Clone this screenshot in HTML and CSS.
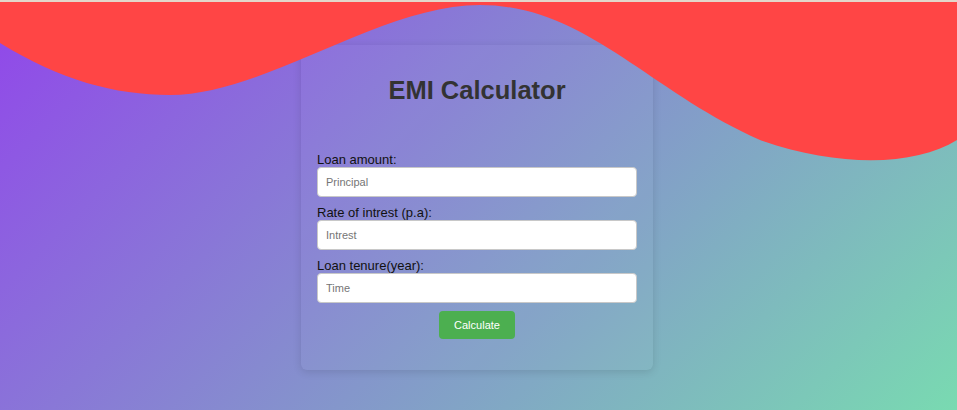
FILE: index.html
```html
<!DOCTYPE html>
<html lang="en">
<head>
<meta charset="utf-8">
<title>EMI Calculator</title>
<link rel="stylesheet" href="styles.css">
</head>
<body>
<div class="strip"></div>
<main class="page">
  <svg class="wave" viewBox="0 0 957 160" preserveAspectRatio="none" aria-hidden="true">
    <path d="M0,41 C60,78 115,93 170,93 C265,93 380,3 480,3 C585,3 650,90 760,138 C840,166 915,164 957,138 L957,0 L0,0 Z" fill="#ff4545"/>
  </svg>
  <section class="card">
    <h1 class="title">EMI Calculator</h1>
    <form class="form">
      <label class="label" for="principal">Loan amount:</label>
      <input class="field" id="principal" type="text" placeholder="Principal">
      <label class="label" for="interest">Rate of intrest (p.a):</label>
      <input class="field" id="interest" type="text" placeholder="Intrest">
      <label class="label" for="time">Loan tenure(year):</label>
      <input class="field" id="time" type="text" placeholder="Time">
      <div class="actions">
        <button class="btn" type="button">Calculate</button>
      </div>
    </form>
  </section>
</main>
</body>
</html>
```

FILE: styles.css
```css
* { box-sizing: border-box; }
html, body { margin: 0; padding: 0; }
body {
  width: 957px;
  height: 410px;
  overflow: hidden;
  font-family: "Liberation Sans", Arial, sans-serif;
}
.strip {
  height: 2px;
  background: #e3d6ca;
}
.page {
  position: relative;
  height: 408px;
  padding-right: 3px;
  background: linear-gradient(135deg, #9146ea, #79dab1);
  display: flex;
  justify-content: center;
  align-items: flex-start;
}
.wave {
  position: absolute;
  top: 0;
  left: 0;
  width: 957px;
  height: 160px;
  z-index: 2;
}
.card {
  margin-top: 43px;
  width: 352px;
  padding: 30px 16px 31px;
  background: rgba(255, 255, 255, 0.03);
  border-radius: 6px;
  box-shadow: 0 2px 8px rgba(0, 0, 0, 0.12);
}
.title {
  margin: 0 0 47px;
  font-size: 25.5px;
  line-height: 30px;
  font-weight: bold;
  text-align: center;
  color: #333;
}
.form {
  display: flex;
  flex-direction: column;
}
.label {
  font-size: 13px;
  line-height: 15px;
  color: #111;
}
.field {
  height: 30px;
  margin: 0 0 8px;
  padding: 0 8px;
  border: 1px solid #c8c8c8;
  border-radius: 4px;
  background: #fff;
  font-family: "Liberation Sans", Arial, sans-serif;
  font-size: 11px;
  color: #333;
}
.field::placeholder { color: #757575; }
.actions {
  display: flex;
  justify-content: center;
}
.btn {
  width: 76px;
  height: 28px;
  border: none;
  border-radius: 4px;
  background: #4caf50;
  color: #fff;
  font-family: "Liberation Sans", Arial, sans-serif;
  font-size: 11px;
  padding: 0;
}
```
